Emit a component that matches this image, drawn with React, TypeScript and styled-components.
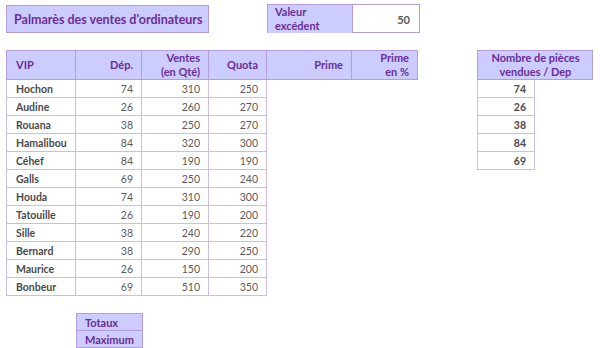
import React from "react";
import styled, { createGlobalStyle } from "styled-components";

const Global = createGlobalStyle`
  html, body { margin: 0; padding: 0; background: #ffffff; }
  body { font-family: "Lato", "Open Sans", sans-serif; }
  * { box-sizing: border-box; }
`;

const HEAD_BG = "#ccccff";
const HEAD_TEXT = "#6a2c98";
const HEAD_LINE = "#b59ddc";
const BODY_LINE = "#cfbbe8";
const BODY_TEXT = "#5a5a5a";

const Page = styled.div`
  width: 600px;
  height: 348px;
  overflow: hidden;
  padding: 4px 0 0 6px;
`;

const TopRow = styled.div`
  display: flex;
  align-items: flex-start;
`;

const TitleBox = styled.div`
  margin-top: 1px;
  width: 203px;
  height: 28px;
  background: ${HEAD_BG};
  border: 1px solid ${HEAD_LINE};
  color: ${HEAD_TEXT};
  font-weight: 700;
  font-size: 12.5px;
  white-space: nowrap;
  display: flex;
  align-items: center;
  padding-left: 7px;
`;

const ValueBox = styled.div`
  margin-left: 58px;
  display: grid;
  grid-template-columns: 85px 66px;
  height: 29px;
  border: 1px solid ${HEAD_LINE};
`;

const ValueLabel = styled.div`
  background: ${HEAD_BG};
  border-right: 1px solid ${HEAD_LINE};
  color: ${HEAD_TEXT};
  font-weight: 700;
  font-size: 11px;
  line-height: 14px;
  padding: 0 0 0 7px;
`;

const ValueNum = styled.div`
  display: flex;
  align-items: center;
  justify-content: flex-end;
  padding-right: 9px;
  color: ${BODY_TEXT};
  font-weight: 700;
  font-size: 11px;
`;

const MainRow = styled.div`
  margin-top: 17px;
  display: flex;
  align-items: flex-start;
  gap: 59px;
`;

const Grid = styled.div<{ $cols: string }>`
  display: grid;
  grid-template-columns: ${(p) => p.$cols};
`;

const HeadCell = styled.div<{ $align?: "left" | "right" | "center"; $first?: boolean; $span?: number }>`
  grid-column: span ${(p) => p.$span ?? 1};
  height: 30px;
  background: ${HEAD_BG};
  border-top: 1px solid ${HEAD_LINE};
  border-bottom: 1px solid ${HEAD_LINE};
  border-right: 1px solid ${HEAD_LINE};
  border-left: ${(p) => (p.$first ? `1px solid ${HEAD_LINE}` : "none")};
  color: ${HEAD_TEXT};
  font-weight: 700;
  font-size: 11px;
  line-height: 14px;
  white-space: nowrap;
  display: flex;
  flex-direction: column;
  justify-content: center;
  align-items: ${(p) =>
    p.$align === "left" ? "flex-start" : p.$align === "center" ? "center" : "flex-end"};
  text-align: ${(p) => p.$align ?? "right"};
  padding: 0 8px 0 9px;
`;

const Cell = styled.div<{ $name?: boolean; $first?: boolean; $bold?: boolean }>`
  height: 18px;
  border-bottom: 1px solid ${BODY_LINE};
  border-right: 1px solid ${BODY_LINE};
  border-left: ${(p) => (p.$first ? `1px solid ${BODY_LINE}` : "none")};
  display: flex;
  align-items: center;
  justify-content: ${(p) => (p.$name ? "flex-start" : "flex-end")};
  padding: 0 8px 0 9px;
  font-size: 10.5px;
  font-weight: ${(p) => (p.$name || p.$bold ? 700 : 400)};
  color: ${(p) => (p.$name || p.$bold ? "#4a4a4a" : BODY_TEXT)};
`;

const Blank = styled.div`
  height: 18px;
`;

const TotalsBox = styled.div`
  margin-top: 17px;
  margin-left: 70px;
  width: 67px;
  border: 1px solid ${HEAD_LINE};
  border-bottom: none;
`;

const TotalsRow = styled.div`
  height: 17px;
  background: ${HEAD_BG};
  border-bottom: 1px solid ${HEAD_LINE};
  color: ${HEAD_TEXT};
  font-weight: 700;
  font-size: 11px;
  display: flex;
  align-items: center;
  padding-left: 8px;
`;

const rows: [string, number, number, number][] = [
  ["Hochon", 74, 310, 250],
  ["Audine", 26, 260, 270],
  ["Rouana", 38, 250, 270],
  ["Hamalibou", 84, 320, 300],
  ["Céhef", 84, 190, 190],
  ["Galls", 69, 250, 240],
  ["Houda", 74, 310, 300],
  ["Tatouille", 26, 190, 200],
  ["Sille", 38, 240, 220],
  ["Bernard", 38, 290, 250],
  ["Maurice", 26, 150, 200],
  ["Bonbeur", 69, 510, 350],
];

const deps = [74, 26, 38, 84, 69];

export default function App() {
  return (
    <>
      <Global />
      <Page>
        <TopRow>
          <TitleBox>Palmarès des ventes d'ordinateurs</TitleBox>
          <ValueBox>
            <ValueLabel>
              Valeur
              <br />
              excédent
            </ValueLabel>
            <ValueNum>50</ValueNum>
          </ValueBox>
        </TopRow>
        <MainRow>
          <Grid $cols="70px 66px 67px 58px 85px 66px">
            <HeadCell $align="left" $first>VIP</HeadCell>
            <HeadCell>Dép.</HeadCell>
            <HeadCell>
              <span>Ventes</span>
              <span>(en Qté)</span>
            </HeadCell>
            <HeadCell>Quota</HeadCell>
            <HeadCell>Prime</HeadCell>
            <HeadCell>
              <span>Prime</span>
              <span>en %</span>
            </HeadCell>
            {rows.map(([n, d, v, q]) => (
              <React.Fragment key={n}>
                <Cell $name $first>{n}</Cell>
                <Cell>{d}</Cell>
                <Cell>{v}</Cell>
                <Cell>{q}</Cell>
                <Blank />
                <Blank />
              </React.Fragment>
            ))}
          </Grid>
          <Grid $cols="58px 58px">
            <HeadCell $align="center" $first $span={2}>
              <span>Nombre de pièces</span>
              <span>vendues / Dep</span>
            </HeadCell>
            {deps.map((d, i) => (
              <React.Fragment key={i}>
                <Cell $first $bold>{d}</Cell>
                <Blank />
              </React.Fragment>
            ))}
          </Grid>
        </MainRow>
        <TotalsBox>
          <TotalsRow>Totaux</TotalsRow>
          <TotalsRow>Maximum</TotalsRow>
        </TotalsBox>
      </Page>
    </>
  );
}
